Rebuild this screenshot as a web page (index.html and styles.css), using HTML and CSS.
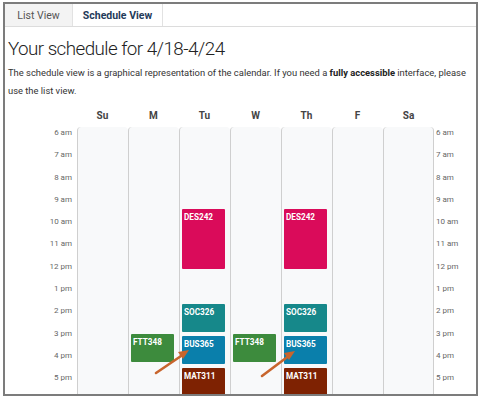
FILE: index.html
```html
<!DOCTYPE html>
<html>
<head>
<meta charset="utf-8">
<link rel="stylesheet" href="styles.css">
</head>
<body>
<div class="frame">
  <div class="tabs">
    <div class="tab tab-inactive">List View</div>
    <div class="tab tab-active">Schedule View</div>
  </div>
  <div class="content">
    <h1 class="title">Your schedule for 4/18-4/24</h1>
    <p class="intro"><span>The schedule view is a graphical representation of the calendar. If you need a</span> <b>fully accessible</b> <span>interface, please</span> <span>use the list view.</span></p>
    <div class="schedule">
      <div class="head-row">
        <div class="head-spacer"></div>
        <div class="day-name">Su</div>
        <div class="day-name">M</div>
        <div class="day-name">Tu</div>
        <div class="day-name">W</div>
        <div class="day-name">Th</div>
        <div class="day-name">F</div>
        <div class="day-name">Sa</div>
      </div>
      <div class="body-row">
        <div class="times times-left">
          <div class="time">6 am</div><div class="time">7 am</div><div class="time">8 am</div><div class="time">9 am</div>
          <div class="time">10 am</div><div class="time">11 am</div><div class="time">12 pm</div><div class="time">1 pm</div>
          <div class="time">2 pm</div><div class="time">3 pm</div><div class="time">4 pm</div><div class="time">5 pm</div>
        </div>
        <div class="day"></div>
        <div class="day">
          <div class="event green" style="top:207px;height:28px">FTT348</div>
        </div>
        <div class="day">
          <div class="event pink" style="top:82px;height:60px">DES242</div>
          <div class="event teal" style="top:177px;height:28px">SOC326</div>
          <div class="event blue" style="top:209px;height:28px">BUS365</div>
          <div class="event maroon" style="top:241px;height:40px">MAT311</div>
        </div>
        <div class="day">
          <div class="event green" style="top:207px;height:28px">FTT348</div>
        </div>
        <div class="day">
          <div class="event pink" style="top:82px;height:60px">DES242</div>
          <div class="event teal" style="top:177px;height:28px">SOC326</div>
          <div class="event blue" style="top:209px;height:28px">BUS365</div>
          <div class="event maroon" style="top:241px;height:40px">MAT311</div>
        </div>
        <div class="day"></div>
        <div class="day day-last"></div>
        <div class="times times-right">
          <div class="time">6 am</div><div class="time">7 am</div><div class="time">8 am</div><div class="time">9 am</div>
          <div class="time">10 am</div><div class="time">11 am</div><div class="time">12 pm</div><div class="time">1 pm</div>
          <div class="time">2 pm</div><div class="time">3 pm</div><div class="time">4 pm</div><div class="time">5 pm</div>
        </div>
      </div>
    </div>
  </div>
  <svg class="arrows" width="471" height="390" viewBox="0 0 471 390">
    <line x1="151" y1="369" x2="179" y2="350" stroke="#c8652d" stroke-width="2.6" stroke-linecap="round"/>
    <polygon points="184,346 173,348 178,355" fill="#c8652d"/>
    <line x1="257" y1="372" x2="285" y2="351" stroke="#c8652d" stroke-width="2.6" stroke-linecap="round"/>
    <polygon points="290,347 279,349 284,356" fill="#c8652d"/>
  </svg>
</div>
</body>
</html>
```
FILE: styles.css
```css
html, body {
  margin: 0;
  padding: 0;
  background: #ffffff;
}
body {
  font-family: Roboto, "Liberation Sans", sans-serif;
  color: #333333;
}
.frame {
  position: relative;
  margin: 2px 0 0 3px;
  width: 471px;
  height: 390px;
  border: 2px solid #7c7c7c;
  overflow: hidden;
  background: #ffffff;
}
.tabs {
  display: flex;
  height: 22px;
  border-bottom: 1px solid #dcdcdc;
}
.tab {
  display: flex;
  align-items: center;
  justify-content: center;
  font-size: 10.5px;
  border-right: 1px solid #e2e2e2;
}
.tab-inactive {
  width: 67px;
  background: #f3f3f3;
  color: #555555;
}
.tab-active {
  width: 89px;
  background: #ffffff;
  color: #1f3b5a;
  font-weight: 700;
}
.content {
  padding-left: 3px;
}
.title {
  margin: 8px 0 0 0;
  font-size: 18.8px;
  line-height: 28px;
  font-weight: 300;
  letter-spacing: -0.55px;
  color: #222222;
}
.intro {
  margin: 1px 0 0 0;
  font-size: 9.4px;
  line-height: 18px;
  color: #333333;
}
.intro b {
  font-weight: 700;
  color: #222222;
}
.schedule {
  margin-left: -3px;
}
.head-row {
  display: flex;
  height: 27px;
}
.head-spacer {
  width: 72px;
}
.day-name {
  width: 51px;
  padding-top: 10px;
  line-height: 12px;
  text-align: center;
  font-size: 10px;
  font-weight: 700;
  color: #444444;
  box-sizing: border-box;
}
.body-row {
  display: flex;
  height: 300px;
}
.times {
  display: flex;
  flex-direction: column;
}
.time {
  height: 22.3px;
  line-height: 11px;
  font-size: 8px;
  color: #666666;
  flex: none;
}
.times-left {
  width: 72px;
  padding-right: 5px;
  box-sizing: border-box;
  text-align: right;
}
.times-right {
  padding-left: 2px;
  text-align: left;
}
.day {
  position: relative;
  width: 51px;
  box-sizing: border-box;
  background: #f8f9fa;
  border-left: 1px solid #cfcfcf;
  border-top-left-radius: 4px;
  border-top-right-radius: 4px;
}
.day-last {
  border-right: 1px solid #cfcfcf;
}
.event {
  position: absolute;
  left: 2px;
  width: 43px;
  box-sizing: border-box;
  padding: 3px 2px;
  border-radius: 1px;
  color: #ffffff;
  font-size: 8.2px;
  font-weight: 700;
  line-height: 10px;
}
.pink { background: #da0b5a; }
.teal { background: #16888a; }
.blue { background: #0a7fab; }
.maroon { background: #7e2202; }
.green { background: #3d8b3d; }
.arrows {
  position: absolute;
  left: 0;
  top: 0;
  pointer-events: none;
}
```
